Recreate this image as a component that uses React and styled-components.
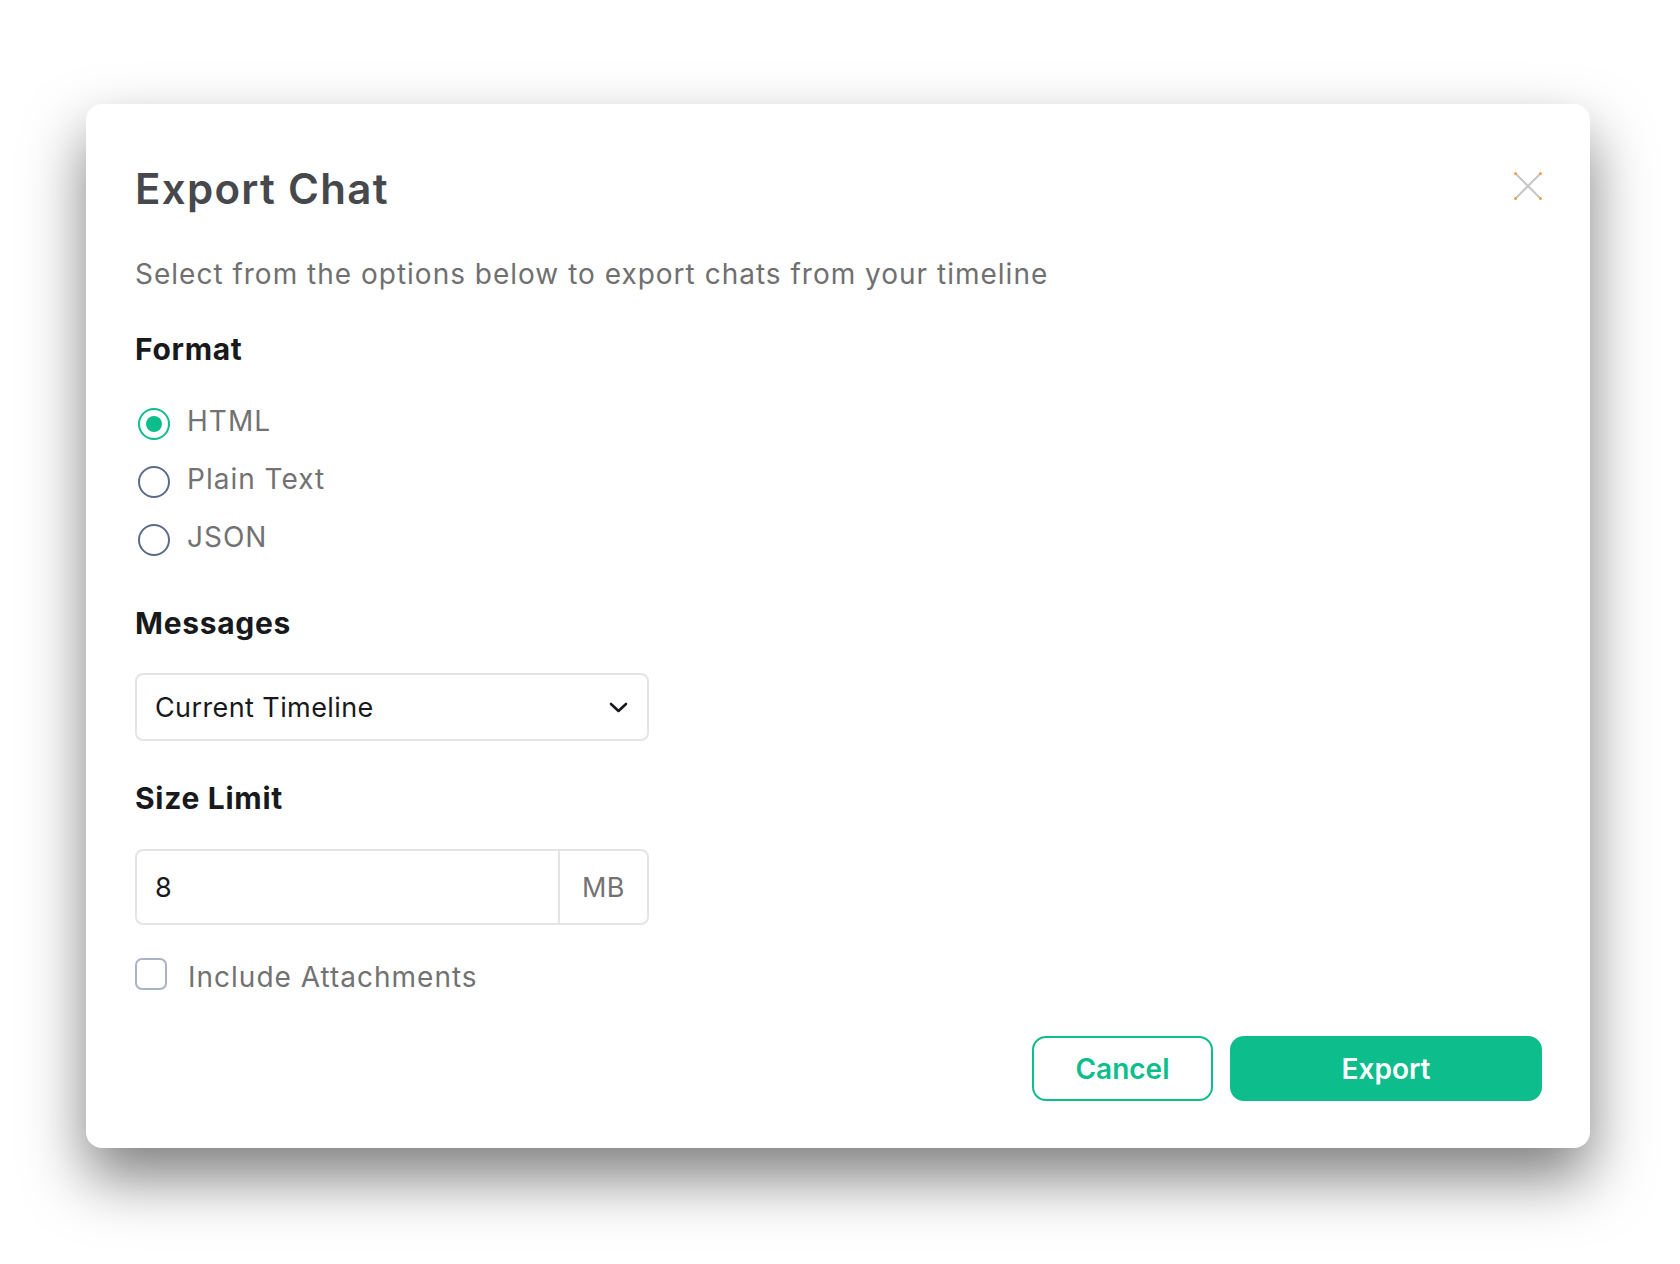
import { useState } from "react"
import styled, { createGlobalStyle } from "styled-components"

const GlobalStyle = createGlobalStyle`
   html, body {
      margin: 0;
      padding: 0;
      background: #ffffff;
      font-family: Inter, "Noto Sans", sans-serif;
   }
`

const Page = styled.div`
   width: 1680px;
   height: 1264px;
   padding: 104px 0 0 86px;
   box-sizing: border-box;
`

const Dialog = styled.div`
   width: 1504px;
   box-sizing: border-box;
   padding: 59px 48px 47px 49px;
   background: #ffffff;
   border-radius: 16px;
   box-shadow: 0 30px 60px rgba(0, 0, 0, 0.5);
   display: flex;
   flex-direction: column;
`

const Header = styled.div`
   display: flex;
   justify-content: space-between;
   align-items: center;
`

const Title = styled.h1`
   margin: 0;
   font-size: 42px;
   line-height: 52px;
   font-weight: 600;
   letter-spacing: 1.3px;
   color: #46484c;
`

const CloseButton = styled.button`
   width: 28px;
   height: 28px;
   margin-top: -6px;
   padding: 0;
   border: none;
   background: none;
   cursor: pointer;
   display: flex;
   align-items: center;
   justify-content: center;
`

const Subtitle = styled.p`
   margin: 43px 0 0;
   font-size: 28px;
   line-height: 32px;
   letter-spacing: 1px;
   color: #707070;
`

const SectionTitle = styled.h2`
   margin: ${(p) => p.$top}px 0 0;
   font-size: 30px;
   line-height: 36px;
   font-weight: 700;
   letter-spacing: 0.7px;
   color: #17191c;
`

const RadioGroup = styled.div`
   margin-top: 34px;
   display: flex;
   flex-direction: column;
   gap: 18px;
`

const OptionRow = styled.label`
   display: flex;
   align-items: flex-start;
   gap: 17px;
   height: 40px;
   cursor: pointer;
   margin-top: ${(p) => p.$top || 0}px;
`

const RadioCircle = styled.span`
   width: 32px;
   height: 32px;
   margin-top: ${(p) => p.$offset}px;
   margin-left: 3px;
   box-sizing: border-box;
   border-radius: 50%;
   border: 2px solid ${(p) => (p.$checked ? "#0dbd8b" : "#5d6b8a")};
   display: flex;
   align-items: center;
   justify-content: center;
   flex-shrink: 0;

   &::after {
      content: "";
      width: 16px;
      height: 16px;
      border-radius: 50%;
      background: ${(p) => (p.$checked ? "#0dbd8b" : "transparent")};
   }
`

const Checkbox = styled.span`
   width: 32px;
   height: 32px;
   margin-top: 1px;
   box-sizing: border-box;
   border: 2px solid #aab4c6;
   border-radius: 7px;
   flex-shrink: 0;
   margin-right: 4px;
`

const OptionText = styled.span`
   font-size: 28px;
   line-height: 40px;
   letter-spacing: 1px;
   color: #727272;
`

const SelectBox = styled.div`
   margin-top: 32px;
   width: 514px;
   height: 68px;
   box-sizing: border-box;
   border: 2px solid #e4e4e4;
   border-radius: 8px;
   padding: 0 19px 0 18px;
   display: flex;
   align-items: center;
   justify-content: space-between;
   cursor: pointer;
`

const SelectValue = styled.span`
   font-size: 27px;
   letter-spacing: 0.4px;
   color: #17191c;
`

const InputGroup = styled.div`
   margin-top: 33px;
   width: 514px;
   height: 76px;
   box-sizing: border-box;
   border: 2px solid #e4e4e4;
   border-radius: 8px;
   display: flex;
`

const NumberInput = styled.input`
   flex: 1;
   min-width: 0;
   border: none;
   outline: none;
   background: none;
   padding: 0 0 0 18px;
   font-family: inherit;
   font-size: 27px;
   color: #17191c;
`

const Suffix = styled.span`
   width: 87px;
   border-left: 2px solid #e4e4e4;
   display: flex;
   align-items: center;
   justify-content: center;
   font-size: 27px;
   letter-spacing: 0.4px;
   color: #737373;
`

const Footer = styled.div`
   margin-top: 39px;
   display: flex;
   justify-content: flex-end;
   gap: 17px;
`

const Button = styled.button`
   height: 65px;
   box-sizing: border-box;
   border-radius: 14px;
   border: 2px solid #0dbd8b;
   background: ${(p) => (p.$primary ? "#0dbd8b" : "#ffffff")};
   color: ${(p) => (p.$primary ? "#ffffff" : "#0dbd8b")};
   font-family: inherit;
   font-size: 28px;
   font-weight: 600;
   width: ${(p) => p.$width}px;
   cursor: pointer;
`

const formats = ["HTML", "Plain Text", "JSON"]

const CloseIcon = () => (
   <svg width="28" height="28" viewBox="0 0 28 28">
      <path d="M1 1L27 27M27 1L1 27" stroke="#c6c6c6" strokeWidth="2" />
      <g fill="#f0a43a">
         <circle cx="1.5" cy="1.5" r="1.5" />
         <circle cx="26.5" cy="1.5" r="1.5" />
         <circle cx="1.5" cy="26.5" r="1.5" />
         <circle cx="26.5" cy="26.5" r="1.5" />
      </g>
   </svg>
)

const Chevron = () => (
   <svg width="19" height="11" viewBox="0 0 19 11">
      <path d="M2 2L9.5 9L17 2" fill="none" stroke="#17191c" strokeWidth="2.6" strokeLinecap="round" strokeLinejoin="round" />
   </svg>
)

const App = () => {
   const [format, setFormat] = useState("HTML")
   const [size, setSize] = useState("8")

   return (
      <Page>
         <GlobalStyle />
         <Dialog>
            <Header>
               <Title>Export Chat</Title>
               <CloseButton aria-label="Close">
                  <CloseIcon />
               </CloseButton>
            </Header>
            <Subtitle>Select from the options below to export chats from your timeline</Subtitle>

            <SectionTitle $top={41}>Format</SectionTitle>
            <RadioGroup>
               {formats.map((f) => (
                  <OptionRow key={f} onClick={() => setFormat(f)}>
                     <RadioCircle $checked={format === f} $offset={7} />
                     <OptionText>{f}</OptionText>
                  </OptionRow>
               ))}
            </RadioGroup>

            <SectionTitle $top={48}>Messages</SectionTitle>
            <SelectBox>
               <SelectValue>Current Timeline</SelectValue>
               <Chevron />
            </SelectBox>

            <SectionTitle $top={39}>Size Limit</SectionTitle>
            <InputGroup>
               <NumberInput value={size} onChange={(e) => setSize(e.target.value)} />
               <Suffix>MB</Suffix>
            </InputGroup>

            <OptionRow $top={32}>
               <Checkbox />
               <OptionText>Include Attachments</OptionText>
            </OptionRow>

            <Footer>
               <Button $width={181}>Cancel</Button>
               <Button $primary $width={312}>Export</Button>
            </Footer>
         </Dialog>
      </Page>
   )
}

export default App
